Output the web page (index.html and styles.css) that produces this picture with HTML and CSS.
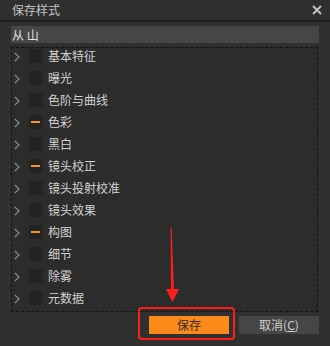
FILE: index.html
```html
<!DOCTYPE html>
<html lang="zh-CN">
<head>
<meta charset="utf-8">
<title>保存样式</title>
<link rel="stylesheet" href="styles.css">
</head>
<body>
<div class="window">
  <div class="titlebar">
    <span class="title">保存样式</span>
    <svg class="close" width="10" height="10" viewBox="0 0 10 10"><path d="M1 1L9 9M9 1L1 9" stroke="#c8c8c8" stroke-width="1.8" fill="none"/></svg>
  </div>
  <div class="content">
    <div class="input">从 山</div>
    <div class="tree">
      <div class="row"><svg class="chev" width="6" height="10" viewBox="0 0 6 10"><polyline points="0.8,0.8 5,5 0.8,9.2"/></svg><span class="box"></span><span class="label">基本特征</span></div>
      <div class="row"><svg class="chev" width="6" height="10" viewBox="0 0 6 10"><polyline points="0.8,0.8 5,5 0.8,9.2"/></svg><span class="box"></span><span class="label">曝光</span></div>
      <div class="row"><svg class="chev" width="6" height="10" viewBox="0 0 6 10"><polyline points="0.8,0.8 5,5 0.8,9.2"/></svg><span class="box"></span><span class="label">色阶与曲线</span></div>
      <div class="row"><svg class="chev" width="6" height="10" viewBox="0 0 6 10"><polyline points="0.8,0.8 5,5 0.8,9.2"/></svg><span class="box mixed"></span><span class="label">色彩</span></div>
      <div class="row"><svg class="chev" width="6" height="10" viewBox="0 0 6 10"><polyline points="0.8,0.8 5,5 0.8,9.2"/></svg><span class="box"></span><span class="label">黑白</span></div>
      <div class="row"><svg class="chev" width="6" height="10" viewBox="0 0 6 10"><polyline points="0.8,0.8 5,5 0.8,9.2"/></svg><span class="box mixed"></span><span class="label">镜头校正</span></div>
      <div class="row"><svg class="chev" width="6" height="10" viewBox="0 0 6 10"><polyline points="0.8,0.8 5,5 0.8,9.2"/></svg><span class="box"></span><span class="label">镜头投射校准</span></div>
      <div class="row"><svg class="chev" width="6" height="10" viewBox="0 0 6 10"><polyline points="0.8,0.8 5,5 0.8,9.2"/></svg><span class="box"></span><span class="label">镜头效果</span></div>
      <div class="row"><svg class="chev" width="6" height="10" viewBox="0 0 6 10"><polyline points="0.8,0.8 5,5 0.8,9.2"/></svg><span class="box mixed"></span><span class="label">构图</span></div>
      <div class="row"><svg class="chev" width="6" height="10" viewBox="0 0 6 10"><polyline points="0.8,0.8 5,5 0.8,9.2"/></svg><span class="box"></span><span class="label">细节</span></div>
      <div class="row"><svg class="chev" width="6" height="10" viewBox="0 0 6 10"><polyline points="0.8,0.8 5,5 0.8,9.2"/></svg><span class="box"></span><span class="label">除雾</span></div>
      <div class="row"><svg class="chev" width="6" height="10" viewBox="0 0 6 10"><polyline points="0.8,0.8 5,5 0.8,9.2"/></svg><span class="box"></span><span class="label">元数据</span></div>
    </div>
    <div class="footer">
      <button class="btn save">保存<span class="highlight"></span></button>
      <button class="btn cancel">取消(<u>C</u>)</button>
    </div>
  </div>
  <svg class="arrow" width="330" height="346" viewBox="0 0 330 346">
    <polygon points="170.6,227 171.6,227 174,292 171,292" fill="#ff1e1e"/>
    <polygon points="166,289 179,289 172.5,302" fill="#ff1e1e"/>
  </svg>
</div>
</body>
</html>
```
FILE: styles.css
```css
html, body {
  margin: 0;
  padding: 0;
  background: #303030;
}
body {
  width: 330px;
  height: 346px;
  overflow: hidden;
  font-family: "Noto Sans CJK SC", "Noto Sans", sans-serif;
  font-size: 12px;
}
.window {
  position: relative;
  width: 330px;
  height: 346px;
  background: #303030;
}
.titlebar {
  height: 20px;
  display: flex;
  align-items: center;
  justify-content: space-between;
  padding: 0 8px 0 12px;
  border-bottom: 2px solid #1e1e1e;
  background: #2f2f2f;
}
.title {
  color: #c4c4c4;
  line-height: 20px;
}
.close {
  display: block;
  margin-top: -1px;
}
.content {
  padding: 4px 11px 0 11px;
}
.input {
  height: 17px;
  background: #464646;
  color: #e2e2e2;
  line-height: 17px;
  padding-left: 1px;
}
.tree {
  position: relative;
  margin-top: 3px;
  height: 266px;
  background: #2c2c2c;
}
.tree::after {
  content: "";
  position: absolute;
  top: 1px;
  left: 0;
  right: 1px;
  bottom: 0;
  border: 1px dashed #141414;
  pointer-events: none;
}
.row {
  height: 22px;
  display: flex;
  align-items: center;
}
.chev {
  display: block;
  margin-left: 3px;
  margin-right: 9px;
  margin-top: -1px;
  fill: none;
  stroke: #8e8e8e;
  stroke-width: 1.2;
}
.box {
  width: 13px;
  height: 14px;
  background: #232323;
  margin-right: 6px;
  margin-top: -2px;
  position: relative;
}
.box.mixed::after {
  content: "";
  position: absolute;
  left: 2px;
  top: 6px;
  width: 9px;
  height: 2px;
  background: #ff8f1f;
}
.label {
  color: #d2d2d2;
  line-height: 22px;
  margin-top: -2px;
}
.footer {
  display: flex;
  justify-content: flex-end;
  gap: 10px;
  margin-top: 4px;
}
.btn {
  position: relative;
  width: 80px;
  height: 18px;
  border: 0;
  padding: 0;
  margin: 0;
  font-family: "Noto Sans CJK SC", "Noto Sans", sans-serif;
  font-size: 12px;
  line-height: 18px;
}
.save {
  background: #fb8a1b;
  color: #2e2e2e;
}
.cancel {
  background: #464646;
  color: #cfcfcf;
}
.highlight {
  position: absolute;
  left: -11px;
  right: -6px;
  top: -9px;
  bottom: -6px;
  border: 2px solid #ff1e1e;
  border-radius: 4px;
  pointer-events: none;
}
.arrow {
  position: absolute;
  left: 0;
  top: 0;
  pointer-events: none;
}
```
